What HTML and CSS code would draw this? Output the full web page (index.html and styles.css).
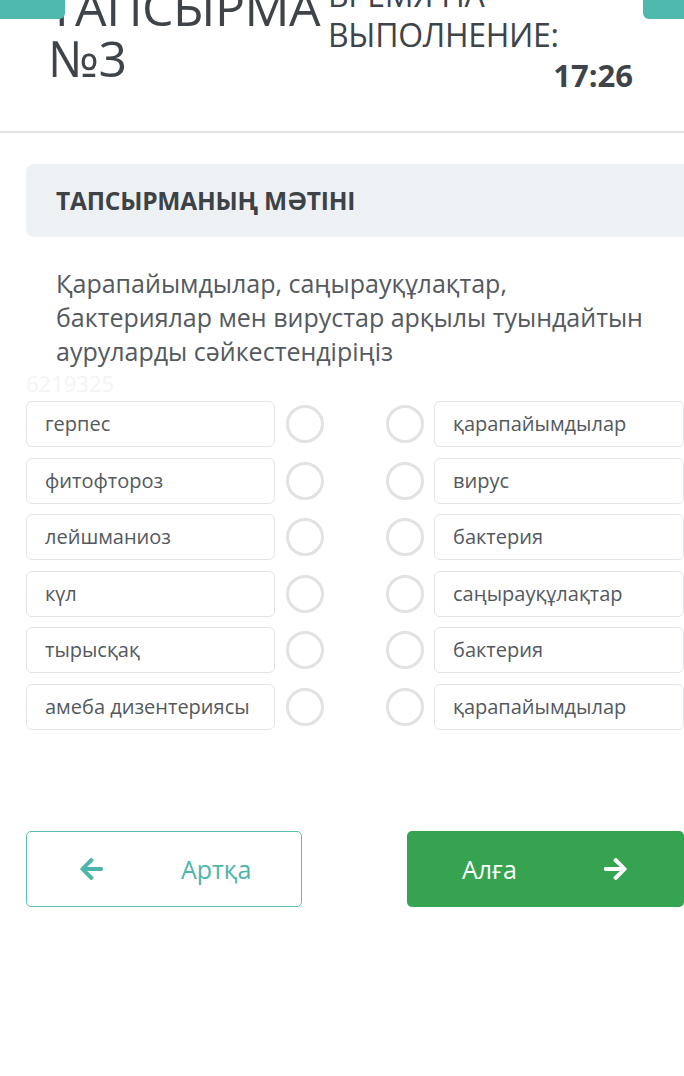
FILE: index.html
```html
<!DOCTYPE html>
<html lang="kk">
<head>
<meta charset="utf-8">
<title>Тапсырма №3</title>
<link rel="stylesheet" href="styles.css">
</head>
<body>
<header class="header">
  <span class="tab tab-left"></span>
  <span class="tab tab-right"></span>
  <h1 class="title">ТАПСЫРМА<br>№3</h1>
  <div class="timer">
    <div class="timer-label">ВРЕМЯ НА<br>ВЫПОЛНЕНИЕ:</div>
    <div class="timer-value">17:26</div>
  </div>
</header>

<main class="content">
  <section class="task-card">
    <h2 class="task-title">ТАПСЫРМАНЫҢ МӘТІНІ</h2>
  </section>

  <p class="question">Қарапайымдылар, саңырауқұлақтар, бактериялар мен вирустар арқылы туындайтын ауруларды сәйкестендіріңіз</p>
  <div class="watermark">6219325</div>

  <div class="match">
    <div class="row"><div class="item">герпес</div><span class="dot"></span><span class="spacer"></span><span class="dot"></span><div class="item item-right">қарапайымдылар</div></div>
    <div class="row"><div class="item">фитофтороз</div><span class="dot"></span><span class="spacer"></span><span class="dot"></span><div class="item item-right">вирус</div></div>
    <div class="row"><div class="item">лейшманиоз</div><span class="dot"></span><span class="spacer"></span><span class="dot"></span><div class="item item-right">бактерия</div></div>
    <div class="row"><div class="item">күл</div><span class="dot"></span><span class="spacer"></span><span class="dot"></span><div class="item item-right">саңырауқұлақтар</div></div>
    <div class="row"><div class="item">тырысқақ</div><span class="dot"></span><span class="spacer"></span><span class="dot"></span><div class="item item-right">бактерия</div></div>
    <div class="row"><div class="item">амеба дизентериясы</div><span class="dot"></span><span class="spacer"></span><span class="dot"></span><div class="item item-right">қарапайымдылар</div></div>
  </div>

  <nav class="nav">
    <button class="btn btn-back">
      <svg class="arrow" viewBox="0 0 448 512" width="25" height="26"><path fill="currentColor" d="M257.5 445.1l-22.2 22.2c-9.4 9.4-24.6 9.4-33.9 0L7 273c-9.4-9.4-9.4-24.6 0-33.9L201.4 44.7c9.4-9.4 24.6-9.4 33.9 0l22.2 22.2c9.5 9.5 9.3 25-.4 34.3L136.6 216H424c13.3 0 24 10.7 24 24v32c0 13.3-10.7 24-24 24H136.6l120.5 114.8c9.8 9.3 10 24.8.4 34.3z"/></svg>
      <span class="btn-text">Артқа</span>
    </button>
    <button class="btn btn-next">
      <span class="btn-text">Алға</span>
      <svg class="arrow" viewBox="0 0 448 512" width="25" height="26"><path fill="currentColor" d="M190.5 66.9l22.2-22.2c9.4-9.4 24.6-9.4 33.9 0L441 239c9.4 9.4 9.4 24.6 0 33.9L246.6 467.3c-9.4 9.4-24.6 9.4-33.9 0l-22.2-22.2c-9.5-9.5-9.3-25 .4-34.3L311.4 296H24c-13.3 0-24-10.7-24-24v-32c0-13.3 10.7-24 24-24h287.4L190.9 101.2c-9.8-9.3-10-24.8-.4-34.3z"/></svg>
    </button>
  </nav>
</main>
</body>
</html>
```

FILE: styles.css
```css
* { box-sizing: border-box; }
html, body { margin: 0; padding: 0; background: #fff; }
body {
  width: 684px;
  font-family: "Open Sans", "Noto Sans", sans-serif;
  color: #4a4f54;
  overflow: hidden;
}

.header {
  position: relative;
  height: 133px;
  border-bottom: 2px solid #e2e4e6;
  display: flex;
  justify-content: space-between;
  overflow: hidden;
}
.tab {
  position: absolute;
  top: 0;
  height: 19px;
  background: #4fb9ad;
}
.tab-left { left: 0; width: 65px; border-bottom-right-radius: 6px; }
.tab-right { right: 0; width: 41px; border-bottom-left-radius: 6px; }

.title {
  margin: -18px 0 0 48px;
  font-size: 50px;
  line-height: 51px;
  font-weight: 400;
  color: #3e4449;
  letter-spacing: -0.5px;
}
.timer {
  margin: -25px 51px 0 0;
  width: 305px;
  color: #3e4449;
}
.timer-label {
  font-size: 32px;
  line-height: 40px;
  letter-spacing: -0.3px;
}
.timer-value {
  text-align: right;
  font-size: 31px;
  line-height: 40px;
  font-weight: 700;
}

.content {
  padding: 31px 0 0 26px;
}
.task-card {
  height: 73px;
  background: #eef1f3;
  border-radius: 8px 0 0 8px;
  display: flex;
  align-items: center;
  padding-left: 30px;
}
.task-title {
  margin: 0;
  font-size: 24.5px;
  font-weight: 700;
  color: #3d4247;
  letter-spacing: -0.2px;
}

.question {
  margin: 29px 0 0 30px;
  max-width: 600px;
  font-size: 25px;
  line-height: 34px;
  color: #54595e;
}
.watermark {
  height: 30px;
  font-size: 22px;
  line-height: 30px;
  color: #f3f4f5;
}

.match {
  margin-top: 3px;
  display: flex;
  flex-direction: column;
  gap: 10.6px;
}
.row {
  display: flex;
  align-items: center;
  height: 46px;
}
.item {
  width: 249px;
  height: 46px;
  border: 1px solid #e2e5e7;
  border-radius: 6px;
  padding-left: 18px;
  font-size: 20px;
  line-height: 44px;
  color: #54595e;
  white-space: nowrap;
}
.item-right {
  width: 250px;
  margin-left: 10px;
}
.dot {
  width: 38px;
  height: 38px;
  border: 3px solid #e0e2e3;
  border-radius: 50%;
  flex: none;
}
.row > .item:first-child + .dot { margin-left: 11px; }
.spacer { flex: 1; }

.nav {
  margin-top: 101px;
  display: flex;
  justify-content: space-between;
}
.btn {
  height: 76px;
  border-radius: 5px;
  display: flex;
  align-items: center;
  font-family: "Open Sans", "Noto Sans", sans-serif;
  font-size: 25px;
  cursor: pointer;
}
.btn-back {
  width: 276px;
  background: #fff;
  border: 1px solid #5dbfb4;
  color: #4db5a9;
  padding-left: 52px;
}
.btn-back .btn-text { margin-left: 77px; }
.btn-next {
  width: 277px;
  background: #35a350;
  border: none;
  color: #fff;
  padding-left: 55px;
}
.btn-next .arrow { margin-left: 86px; }
.arrow { display: block; }
```
